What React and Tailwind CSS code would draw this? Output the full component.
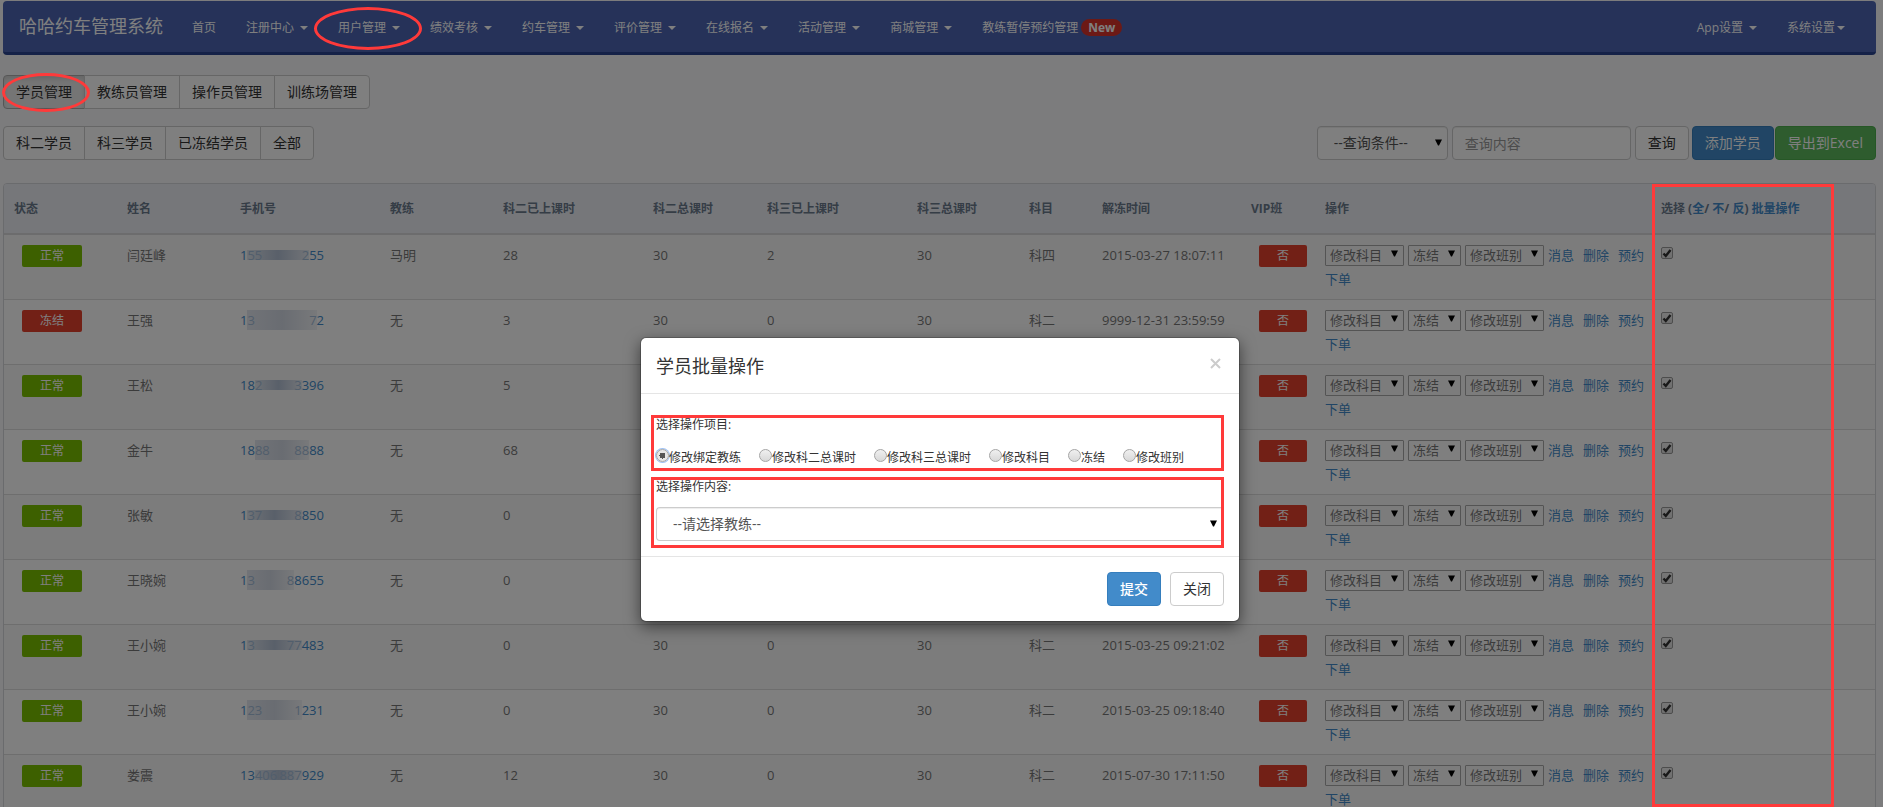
import clsx from "clsx";

const navLinks = [
  { label: "首页" },
  { label: "注册中心", caret: true },
  { label: "用户管理", caret: true, circled: true },
  { label: "绩效考核", caret: true },
  { label: "约车管理", caret: true },
  { label: "评价管理", caret: true },
  { label: "在线报名", caret: true },
  { label: "活动管理", caret: true },
  { label: "商城管理", caret: true },
  { label: "教练暂停预约管理", badge: "New" },
];

const columns = [
  { label: "状态", width: "w-[113px]" },
  { label: "姓名", width: "w-[113px]" },
  { label: "手机号", width: "w-[150px]" },
  { label: "教练", width: "w-[113px]" },
  { label: "科二已上课时", width: "w-[150px]" },
  { label: "科二总课时", width: "w-[114px]" },
  { label: "科三已上课时", width: "w-[150px]" },
  { label: "科三总课时", width: "w-[112px]" },
  { label: "科目", width: "w-[73px]" },
  { label: "解冻时间", width: "w-[149px]" },
  { label: "VIP班", width: "w-[74px]" },
  { label: "操作", width: "w-[336px]" },
];

// phone: [start, faded start, faded end, end], the middle stays masked
const students = [
  { name: "闫廷峰", phone: ["1", "55", "2", "55"], coach: "马明", hours: [28, 30, 2, 30], subject: "科四", time: "2015-03-27 18:07:11" },
  { name: "王强", phone: ["1", "3", "7", "2"], coach: "无", hours: [3, 30, 0, 30], subject: "科二", time: "9999-12-31 23:59:59", frozen: true },
  { name: "王松", phone: ["18", "2", "3", "396"], coach: "无", hours: [5, 30, 0, 30], subject: "科二", time: "2015-03-25 09:21:02" },
  { name: "金牛", phone: ["18", "88", "88", "88"], coach: "无", hours: [68, 30, 0, 30], subject: "科二", time: "2015-03-25 09:21:02" },
  { name: "张敏", phone: ["1", "37", "8", "850"], coach: "无", hours: [0, 30, 0, 30], subject: "科二", time: "2015-03-25 09:21:02" },
  { name: "王晓婉", phone: ["1", "3", "8", "8655"], coach: "无", hours: [0, 30, 0, 30], subject: "科二", time: "2015-03-25 09:21:02" },
  { name: "王小婉", phone: ["1", "3", "77", "483"], coach: "无", hours: [0, 30, 0, 30], subject: "科二", time: "2015-03-25 09:21:02" },
  { name: "王小婉", phone: ["1", "23", "1", "231"], coach: "无", hours: [0, 30, 0, 30], subject: "科二", time: "2015-03-25 09:18:40" },
  { name: "娄震", phone: ["13", "406", "887", "929"], coach: "无", hours: [12, 30, 0, 30], subject: "科二", time: "2015-07-30 17:11:50" },
];

const batchOptions = ["修改绑定教练", "修改科二总课时", "修改科三总课时", "修改科目", "冻结", "修改班别"];

const Caret = () => (
  <span className="inline-block w-0 h-0 border-x-4 border-x-transparent border-t-4 border-t-current"></span>
);

const Arrow = ({ className }) => (
  <svg viewBox="0 0 7 7" className={clsx("absolute w-[7px] h-[7px] pointer-events-none", className)}>
    <path d="M0 0.5H7L4 6.5H3Z" fill="#000" />
  </svg>
);

const Ellipse = ({ className }) => (
  <span className={clsx("absolute z-30 rounded-[50%] border-[3px] border-[#ff3a3a] pointer-events-none", className)}></span>
);

const NavItem = ({ item }) => (
  <li className="relative">
    <a href="#" className="flex items-center px-[15px] pt-0.5 h-[51px] text-xs whitespace-nowrap">
      {item.label}
      {item.caret && <span className="ml-1.5 flex"><Caret /></span>}
      {item.badge && (
        <span className="ml-[3px] px-[7px] h-[17px] rounded-[9px] bg-[#d9332b] text-xs leading-[17px] font-bold">
          {item.badge}
        </span>
      )}
    </a>
    {item.circled && <Ellipse className="-left-[9px] top-[6px] w-[108px] h-[43px]" />}
  </li>
);

const Navbar = () => (
  <nav className="flex items-center h-[54px] rounded border-b-[3px] border-[#2a4490] bg-[#4c65b3] text-white">
    <a href="#" className="pl-4 pr-[14px] text-lg leading-[51px] whitespace-nowrap">哈哈约车管理系统</a>
    <ul className="flex">
      {navLinks.map((item) => (
        <NavItem key={item.label} item={item} />
      ))}
    </ul>
    <ul className="flex ml-auto pr-4">
      <NavItem item={{ label: "App设置", caret: true }} />
      <li>
        <a href="#" className="flex items-center px-[15px] pt-0.5 h-[51px] text-xs whitespace-nowrap">
          系统设置<span className="ml-0.5 flex"><Caret /></span>
        </a>
      </li>
    </ul>
  </nav>
);

const ButtonGroup = ({ labels, active }) => (
  <div className="flex">
    {labels.map((label) => (
      <button
        key={label}
        type="button"
        className={clsx(
          "relative -ml-px first:ml-0 h-[34px] px-3 border text-sm text-[#333] whitespace-nowrap first:rounded-l last:rounded-r",
          label === active
            ? "border-[#adadad] bg-[#ebebeb] shadow-[inset_0_3px_5px_rgba(0,0,0,0.125)]"
            : "border-[#ccc] bg-white"
        )}
      >
        {label}
        {label === active && <Ellipse className="-left-[2px] -top-[3px] w-[88px] h-[39px]" />}
      </button>
    ))}
  </div>
);

const SearchBar = () => (
  <form className="flex text-sm">
    <div className="relative mr-1">
      <select
        aria-label="查询条件"
        className="appearance-none w-[131px] h-[34px] pl-4 pr-5 rounded border border-[#ccc] bg-white text-[#555] shadow-[inset_0_1px_1px_rgba(0,0,0,0.075)]"
      >
        <option>--查询条件--</option>
      </select>
      <Arrow className="right-[6px] top-[13px]" />
    </div>
    <input
      type="text"
      aria-label="查询内容"
      placeholder="查询内容"
      className="w-[179px] h-[34px] px-3 mr-1 rounded border border-[#ccc] bg-white placeholder:text-[#999] shadow-[inset_0_1px_1px_rgba(0,0,0,0.075)]"
    />
    <button type="button" className="h-[34px] px-3 mr-[3px] rounded border border-[#ccc] bg-white text-[#333]">查询</button>
    <button type="button" className="h-[34px] px-3 mr-px rounded border border-[#357ebd] bg-[#428bca] text-white">添加学员</button>
    <button type="button" className="h-[34px] px-3 rounded border border-[#4cae4c] bg-[#5cb85c] text-white">导出到Excel</button>
  </form>
);

const Badge = ({ className, children }) => (
  <span className={clsx("block ml-2 h-[22px] rounded-xs text-center text-xs leading-[22px] text-white", className)}>
    {children}
  </span>
);

const RowSelect = ({ label, width }) => (
  <span className="relative flex mr-1">
    <select
      aria-label={label}
      className={clsx("appearance-none h-[21px] pl-1 rounded-[1px] border border-[#a9a9a9] bg-transparent text-[13px] leading-[19px]", width)}
    >
      <option>{label}</option>
    </select>
    <Arrow className="right-[6px] top-[7px]" />
  </span>
);

const MaskedPhone = ({ parts, dark }) => {
  const [start, fadedStart, fadedEnd, end] = parts;
  return (
    <a href="#" className="flex items-center w-[84px] text-[#428bca]">
      {start}
      <span
        className={clsx(
          "flex flex-1 items-center justify-between text-[#a3bcd8]",
          dark
            ? "h-[10px] bg-linear-to-r from-[#dfe5ec] via-[#b3c0d4] to-[#e6eaf0]"
            : "h-5 bg-linear-to-r from-[#e3e7ef] via-[#d3d9e4] to-[#f1f3f6]"
        )}
      >
        <span>{fadedStart}</span>
        <span>{fadedEnd}</span>
      </span>
      {end}
    </a>
  );
};

const StudentRow = ({ student, index }) => (
  <tr className="odd:bg-[#f9f9f9] even:bg-white [&>td]:h-[65px] [&>td]:pl-2.5 [&>td]:pt-2 [&>td]:align-top [&>td]:border-b [&>td]:border-[#ddd]">
    <td>
      <div className="pt-0.5">
        <Badge className={clsx("w-[60px]", student.frozen ? "bg-[#e5412d]" : "bg-[#7ac000]")}>
          {student.frozen ? "冻结" : "正常"}
        </Badge>
      </div>
    </td>
    <td>{student.name}</td>
    <td><MaskedPhone parts={student.phone} dark={index % 2 === 0} /></td>
    <td>{student.coach}</td>
    {student.hours.map((value, i) => (
      <td key={i}>{value}</td>
    ))}
    <td>{student.subject}</td>
    <td className="whitespace-nowrap">{student.time}</td>
    <td>
      <div className="pt-0.5">
        <Badge className="w-12 bg-[#e5412d]">否</Badge>
      </div>
    </td>
    <td>
      <div className="flex flex-wrap items-center [&>*]:h-6 [&>*]:items-center">
        <RowSelect label="修改科目" width="w-[79px]" />
        <RowSelect label="冻结" width="w-[53px]" />
        <RowSelect label="修改班别" width="w-[79px]" />
        <a href="#" className="mr-[9px] text-[#428bca]">消息</a>
        <a href="#" className="mr-[9px] text-[#428bca]">删除</a>
        <a href="#" className="text-[#428bca]">预约</a>
        <a href="#" className="text-[#428bca]">下单</a>
      </div>
    </td>
    <td>
      <label className="relative block w-3 h-3 mt-1">
        <input
          type="checkbox"
          defaultChecked
          aria-label={student.name}
          className="peer appearance-none block w-3 h-3 rounded-xs border border-[#9a9a9a] bg-linear-to-b from-[#eee] to-[#ddd]"
        />
        <svg viewBox="0 0 12 12" className="absolute inset-0 hidden peer-checked:block pointer-events-none">
          <path d="M2.5 6.5L4.8 9L9.5 3" fill="none" stroke="#333" strokeWidth="2.4" />
        </svg>
      </label>
    </td>
  </tr>
);

const StudentTable = () => (
  <div className="rounded border border-[#d5d6da] overflow-hidden">
    <table className="w-full table-fixed border-separate border-spacing-0 text-[13px] leading-6 text-[#777]">
      <thead>
        <tr className="bg-[#eceef5] text-left text-xs text-[#6b7a8c] [&>th]:h-[51px] [&>th]:pl-2.5 [&>th]:border-b-2 [&>th]:border-[#d8d8da] whitespace-nowrap">
          {columns.map((column) => (
            <th key={column.label} className={column.width}>{column.label}</th>
          ))}
          <th className="w-[224px]">
            选择 (<a href="#" className="text-[#428bca]">全</a>/ <a href="#" className="text-[#428bca]">不</a>/{" "}
            <a href="#" className="text-[#428bca]">反</a>) <a href="#" className="text-[#428bca]">批量操作</a>
          </th>
        </tr>
      </thead>
      <tbody>
        {students.map((student, index) => (
          <StudentRow key={index} student={student} index={index} />
        ))}
      </tbody>
    </table>
  </div>
);

const BatchModal = () => (
  <div className="absolute inset-0 z-20 flex items-start justify-center pt-[337px] pr-[3px] bg-black/50">
    <div
      role="dialog"
      aria-labelledby="batch-title"
      className="w-[600px] rounded-md border border-black/20 bg-white bg-clip-padding shadow-[0_5px_15px_rgba(0,0,0,0.5)]"
    >
      <div className="flex items-center justify-between h-14 px-[15px] border-b border-[#e5e5e5]">
        <h4 id="batch-title" className="text-lg text-[#333]">学员批量操作</h4>
        <button type="button" aria-label="关闭窗口" className="pb-1 pr-[3px]">
          <svg viewBox="0 0 11 11" className="w-[11px] h-[11px]">
            <path d="M1 1L10 10M10 1L1 10" stroke="#ccc" strokeWidth="2" />
          </svg>
        </button>
      </div>

      <div className="pt-[21px] pb-2 pl-[10px] pr-[15px] text-xs text-[#333]">
        <div role="radiogroup" aria-labelledby="batch-item" className="border-[3px] border-[#ff3a3a] pl-0.5 pt-px">
          <p id="batch-item" className="leading-3">选择操作项目:</p>
          <div className="flex gap-[18px] mt-[17px]">
            {batchOptions.map((option, index) => (
              <label key={option} className="flex items-center h-5 whitespace-nowrap">
                <input
                  type="radio"
                  name="batch"
                  defaultChecked={index === 0}
                  className="appearance-none w-[13px] h-[13px] mb-1.5 rounded-full border border-[#a5a5a5] bg-linear-to-b from-[#f0f0f0] to-[#d8d8d8] checked:shadow-[0_0_0_1px_#9cc0f5] checked:bg-[radial-gradient(circle,#555_0_3px,#e6e6e6_3px)]"
                />
                {option}
              </label>
            ))}
          </div>
        </div>

        <div className="mt-1.5 border-[3px] border-[#ff3a3a] pl-0.5 pt-px pb-1">
          <label htmlFor="batch-coach" className="block leading-3">选择操作内容:</label>
          <div className="relative mt-[14px]">
            <select
              id="batch-coach"
              className="appearance-none block w-full h-[34px] pl-4 rounded-l border border-r-0 border-[#ccc] bg-white text-sm text-[#555] shadow-[inset_0_1px_1px_rgba(0,0,0,0.075)]"
            >
              <option>--请选择教练--</option>
            </select>
            <Arrow className="right-[4px] top-[13px]" />
          </div>
        </div>
      </div>

      <div className="flex justify-end gap-[9px] p-[15px] border-t border-[#e5e5e5] text-sm">
        <button type="button" className="h-[34px] px-3 rounded border border-[#357ebd] bg-[#428bca] font-medium text-white">提交</button>
        <button type="button" className="h-[34px] px-3 rounded border border-[#ccc] bg-white text-[#333]">关闭</button>
      </div>
    </div>
  </div>
);

const App = () => {
  return (
    <div className="relative h-screen overflow-hidden bg-[#f8f9fb] font-['Open_Sans','Noto_Sans_CJK_SC',sans-serif]">
      <div className="pt-px pl-[3px] pr-[7px]">
        <Navbar />
        <div className="mt-5">
          <ButtonGroup labels={["学员管理", "教练员管理", "操作员管理", "训练场管理"]} active="学员管理" />
        </div>
        <div className="flex justify-between mt-[17px] mb-[23px]">
          <ButtonGroup labels={["科二学员", "科三学员", "已冻结学员", "全部"]} />
          <SearchBar />
        </div>
        <StudentTable />
      </div>

      <BatchModal />

      {/* Highlight over the selection column */}
      <div className="absolute z-30 top-[184px] bottom-0 right-[49px] w-[182px] border-[3px] border-[#ff3a3a] pointer-events-none"></div>
    </div>
  );
};

export default App;
